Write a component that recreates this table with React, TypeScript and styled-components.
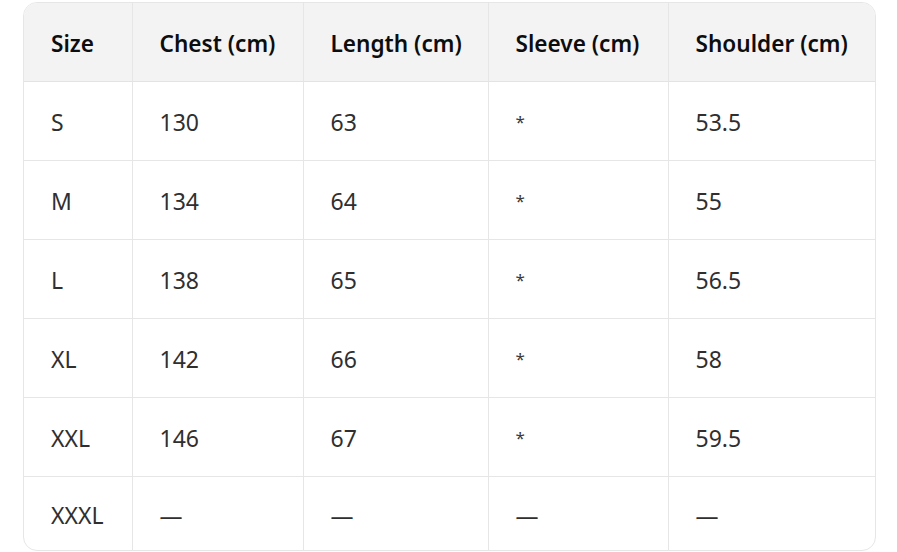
import React from "react";
import styled, { createGlobalStyle } from "styled-components";

const Global = createGlobalStyle`
  html, body { margin: 0; padding: 0; background: #ffffff; }
  body { font-family: "Noto Sans", "Open Sans", sans-serif; }
`;

const Page = styled.div`
  padding: 2px 21px 0 23px;
  width: 897px;
  height: 552px;
  box-sizing: border-box;
  overflow: hidden;
`;

const Frame = styled.div`
  border: 1px solid #e6e6e6;
  border-radius: 14px;
  overflow: hidden;
  width: 853px;
  box-sizing: border-box;
`;

const Table = styled.table`
  width: 100%;
  border-collapse: collapse;
  table-layout: fixed;
  font-size: 23px;
`;

const Th = styled.th<{ $w: number }>`
  width: ${(p) => p.$w}px;
  height: 78px;
  padding: 3px 0 0 27px;
  text-align: left;
  font-size: 22.6px;
  font-weight: 600;
  color: #0d0d0d;
  background: #f3f3f3;
  border-bottom: 1px solid #e3e3e3;
  border-left: 1px solid #e6e6e6;
  box-sizing: border-box;
  white-space: nowrap;
  &:first-child { border-left: none; }
`;

const Row = styled.tr`
  &:last-child td {
    height: 70px;
  }
`;

const Td = styled.td`
  height: 75px;
  padding: 3px 0 0 27px;
  text-align: left;
  color: #2f2f2f;
  font-weight: 400;
  border-top: 1px solid #e6e6e6;
  border-left: 1px solid #e6e6e6;
  &:first-child { border-left: none; }
`;

const Star = styled.span`
  display: inline-block;
  font-size: 17px;
  color: #3a3a3a;
  transform: translateY(-3px);
`;

const cols = [
  { label: "Size", w: 108 },
  { label: "Chest (cm)", w: 171 },
  { label: "Length (cm)", w: 185 },
  { label: "Sleeve (cm)", w: 180 },
  { label: "Shoulder (cm)", w: 207 },
];

const rows = [
  ["S", "130", "63", "*", "53.5"],
  ["M", "134", "64", "*", "55"],
  ["L", "138", "65", "*", "56.5"],
  ["XL", "142", "66", "*", "58"],
  ["XXL", "146", "67", "*", "59.5"],
  ["XXXL", "—", "—", "—", "—"],
];

export default function App() {
  return (
    <>
      <Global />
      <Page>
        <Frame>
          <Table>
            <thead>
              <tr>
                {cols.map((c) => (
                  <Th key={c.label} $w={c.w}>
                    {c.label}
                  </Th>
                ))}
              </tr>
            </thead>
            <tbody>
              {rows.map((r) => (
                <Row key={r[0]}>
                  {r.map((v, i) => (
                    <Td key={i}>{v === "*" ? <Star>*</Star> : v}</Td>
                  ))}
                </Row>
              ))}
            </tbody>
          </Table>
        </Frame>
      </Page>
    </>
  );
}
